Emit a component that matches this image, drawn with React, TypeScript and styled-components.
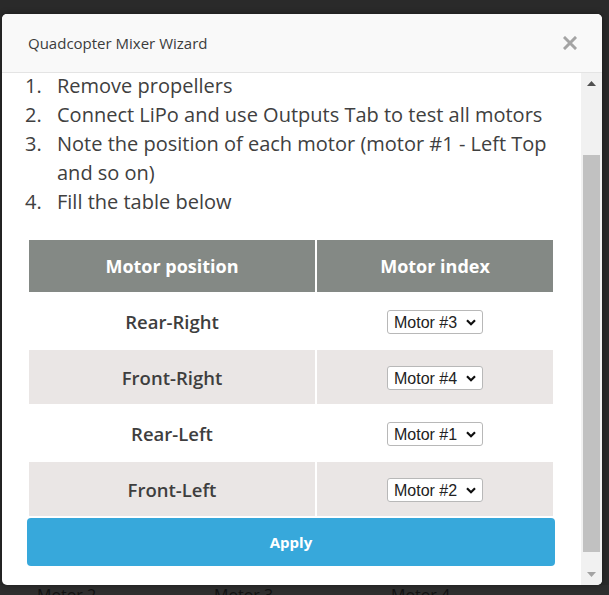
import React from "react";
import styled, { createGlobalStyle } from "styled-components";

const GlobalStyle = createGlobalStyle`
  html, body { margin: 0; padding: 0; background: #2a2a2a; }
  body { font-family: "Open Sans", "Noto Sans", sans-serif; overflow: hidden; }
`;

const Page = styled.div`
  position: relative;
  width: 609px;
  height: 595px;
  overflow: hidden;
  background: #2a2a2a;
`;

const Backdrop = styled.div`
  height: 100%;
  display: flex;
  flex-direction: column;
  justify-content: flex-end;
`;

const BackRow = styled.div`
  display: flex;
  padding-left: 37px;
  margin-bottom: -10px;
  height: 20px;
  background: #2e2e2e;
`;

const BackLabel = styled.span`
  width: 177px;
  font-size: 16px;
  line-height: 20px;
  color: #121212;
`;

const Modal = styled.div`
  position: absolute;
  left: 2px;
  top: 14px;
  width: 600px;
  height: 571px;
  background: #fff;
  border-radius: 5px;
  overflow: hidden;
  display: flex;
  flex-direction: column;
  box-shadow: 0 0 6px rgba(0, 0, 0, 0.4);
`;

const Header = styled.div`
  flex: 0 0 58px;
  display: flex;
  align-items: center;
  justify-content: space-between;
  padding: 0 25px 0 26px;
  background: #f9f9f9;
  border-bottom: 1px solid #e4e4e4;
`;

const Title = styled.div`
  font-size: 15px;
  color: #3c3c3c;
`;

const CloseButton = styled.button`
  display: flex;
  padding: 0;
  border: none;
  background: none;
  cursor: pointer;
`;

const Body = styled.div`
  flex: 1;
  min-height: 0;
  display: flex;
`;

const Viewport = styled.div`
  flex: 1;
  min-width: 0;
  overflow: hidden;
`;

const Content = styled.div`
  padding: 0 26px 37px 25px;
  color: #404040;
`;

const Steps = styled.ol`
  margin: -2px 0 0;
  padding-left: 20px;
  font-size: 20px;
  line-height: 29px;
`;

const Step = styled.li`
  padding-left: 10px;
`;

const MotorTable = styled.table`
  width: 100%;
  margin-top: 22px;
  border-collapse: separate;
  border-spacing: 2px;
`;

const HeadCell = styled.th<{ $w?: number }>`
  height: 52px;
  padding: 0;
  width: ${(p) => (p.$w ? `${p.$w}px` : "auto")};
  background: #848985;
  color: #fff;
  font-size: 18px;
  font-weight: 700;
  text-align: center;
`;

const Row = styled.tr<{ $shaded: boolean }>`
  background: ${(p) => (p.$shaded ? "#eae6e5" : "#fff")};
`;

const Cell = styled.td`
  height: 54px;
  padding: 0;
  text-align: center;
  font-size: 18.5px;
  font-weight: 600;
  color: #3e3e3e;
`;

const chevron = `url("data:image/svg+xml;utf8,<svg xmlns='http://www.w3.org/2000/svg' width='10' height='7' viewBox='0 0 10 7'><path d='M1 1.2 L5 5.2 L9 1.2' fill='none' stroke='%23111' stroke-width='2.2'/></svg>")`;

const MotorSelect = styled.select`
  appearance: none;
  -webkit-appearance: none;
  height: 24px;
  width: 96px;
  padding: 0 0 0 6px;
  border: 1px solid #b8b8b8;
  border-radius: 3px;
  background: #fff ${chevron} no-repeat right 6px center;
  color: #222;
  font-family: "Liberation Sans", Arial, sans-serif;
  font-size: 16px;
`;

const ApplyButton = styled.button`
  display: block;
  width: 100%;
  height: 48px;
  border: none;
  border-radius: 4px;
  background: #37a8db;
  color: #fff;
  font-family: "Open Sans", sans-serif;
  font-size: 15px;
  font-weight: 700;
  cursor: pointer;
`;

/* drawn scrollbar */
const ScrollBar = styled.div`
  flex: 0 0 21px;
  display: flex;
  flex-direction: column;
  background: #f1f1f1;
`;

const ScrollArrow = styled.div`
  flex: 0 0 21px;
  display: flex;
  align-items: center;
  justify-content: center;
`;

const ScrollTrack = styled.div`
  flex: 1;
  display: flex;
  flex-direction: column;
  padding: 61px 2px 0;
`;

const ScrollThumb = styled.div`
  height: 397px;
  background: #c1c1c1;
`;

const rows = [
  { pos: "Rear-Right", motor: 3 },
  { pos: "Front-Right", motor: 4 },
  { pos: "Rear-Left", motor: 1 },
  { pos: "Front-Left", motor: 2 },
];

const CloseIcon = () => (
  <svg width="14" height="14" viewBox="0 0 14 14">
    <path d="M2 2 L12 12 M12 2 L2 12" stroke="#a4a4a4" strokeWidth="3" strokeLinecap="square" />
  </svg>
);

const Triangle = ({ up, color }: { up: boolean; color: string }) => (
  <svg width="9" height="5" viewBox="0 0 9 5">
    <path d={up ? "M0 5 L4.5 0 L9 5 Z" : "M0 0 L4.5 5 L9 0 Z"} fill={color} />
  </svg>
);

export default function App() {
  return (
    <>
      <GlobalStyle />
      <Page>
        <Backdrop>
          <BackRow>
            <BackLabel>Motor 2</BackLabel>
            <BackLabel>Motor 3</BackLabel>
            <BackLabel>Motor 4</BackLabel>
          </BackRow>
        </Backdrop>
        <Modal>
          <Header>
            <Title>Quadcopter Mixer Wizard</Title>
            <CloseButton aria-label="Close">
              <CloseIcon />
            </CloseButton>
          </Header>
          <Body>
            <Viewport>
              <Content>
                <Steps>
                  <Step>Remove propellers</Step>
                  <Step>Connect LiPo and use Outputs Tab to test all motors</Step>
                  <Step>Note the position of each motor (motor #1 - Left Top and so on)</Step>
                  <Step>Fill the table below</Step>
                </Steps>
                <MotorTable>
                  <thead>
                    <tr>
                      <HeadCell $w={286}>Motor position</HeadCell>
                      <HeadCell>Motor index</HeadCell>
                    </tr>
                  </thead>
                  <tbody>
                    {rows.map((r, i) => (
                      <Row key={r.pos} $shaded={i % 2 === 1}>
                        <Cell>{r.pos}</Cell>
                        <Cell>
                          <MotorSelect defaultValue={String(r.motor)}>
                            {[1, 2, 3, 4].map((m) => (
                              <option key={m} value={String(m)}>
                                Motor #{m}
                              </option>
                            ))}
                          </MotorSelect>
                        </Cell>
                      </Row>
                    ))}
                  </tbody>
                </MotorTable>
                <ApplyButton>Apply</ApplyButton>
              </Content>
            </Viewport>
            <ScrollBar aria-hidden="true">
              <ScrollArrow>
                <Triangle up color="#505050" />
              </ScrollArrow>
              <ScrollTrack>
                <ScrollThumb />
              </ScrollTrack>
              <ScrollArrow>
                <Triangle up={false} color="#a3a3a3" />
              </ScrollArrow>
            </ScrollBar>
          </Body>
        </Modal>
      </Page>
    </>
  );
}
